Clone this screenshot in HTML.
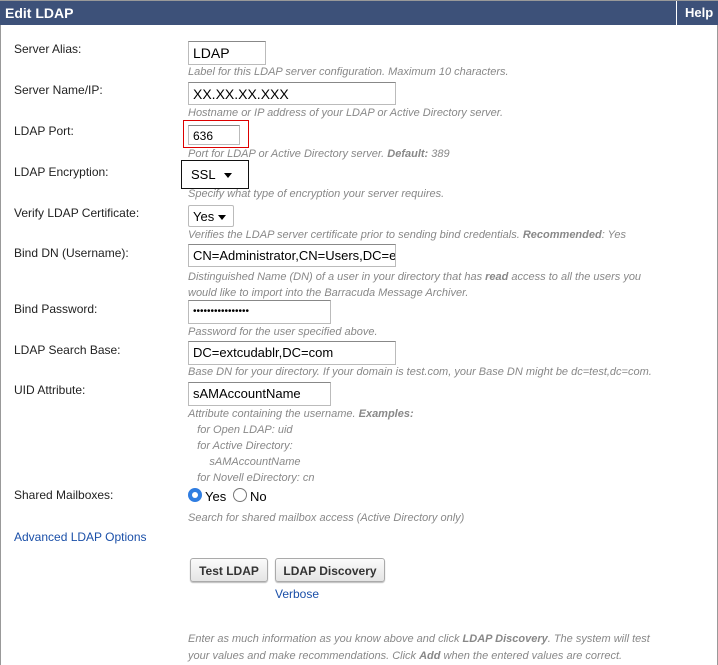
<!DOCTYPE html>
<html><head><style>
*{box-sizing:border-box;margin:0;padding:0}
body{width:718px;height:665px;background:#fff;font-family:"Liberation Sans",Arial,sans-serif;position:relative;overflow:hidden;box-shadow:inset 1px 0 0 #999,inset -1px 0 0 #999}
.hd{position:absolute;left:0;top:0;width:718px;height:25px;background:#3d5179;border-top:1px solid #999;color:#fff;font-weight:bold;font-size:14px}
.a{position:absolute;white-space:nowrap}
.l{font-size:12px;color:#222;left:14px}
.h{font-size:11px;color:#888;font-style:italic;left:188px}
.i{border:1px solid #bbb;border-top-color:#888;font-size:14px;color:#000;padding:3px 0 0 4px;background:#fff}
.s{border:1px solid #bbb;font-size:14px;padding:3px 0 0 4px;border-radius:2px}
.s:after{content:"";position:absolute;right:7px;top:9px;border:4px solid transparent;border-top:5px solid #000}
.b{border:1px solid #aaa;border-radius:3px;background:linear-gradient(#fbfbfb,#e5e5e5);font-size:12px;font-weight:bold;color:#333;text-align:center;padding-top:5px;box-shadow:0 1px 1px #bbb}
a{color:#1a4fa8;text-decoration:none}
</style></head><body>
<div class="hd"><span class="a" style="left:5px;top:4px">Edit LDAP</span><div class="a" style="left:676px;top:0;width:1px;height:25px;background:#fff"></div><span class="a" style="left:685px;top:4px;font-size:13px">Help</span></div>

<div class="a l" style="top:42px">Server Alias:</div>
<div class="a i" style="left:188px;top:41px;width:78px;height:24px">LDAP</div>
<div class="a h" style="top:66px">Label for this LDAP server configuration. Maximum 10 characters.</div>

<div class="a l" style="top:83px">Server Name/IP:</div>
<div class="a i" style="left:188px;top:82px;width:208px;height:23px">XX.XX.XX.XXX</div>
<div class="a h" style="top:107px">Hostname or IP address of your LDAP or Active Directory server.</div>

<div class="a l" style="top:124px">LDAP Port:</div>
<div class="a" style="left:183px;top:120px;width:66px;height:28px;border:1px solid #d00"></div>
<div class="a i" style="left:188px;top:125px;width:52px;height:20px;font-size:12px;padding-top:3px">636</div>
<div class="a h" style="top:148px">Port for LDAP or Active Directory server. <b>Default:</b> 389</div>

<div class="a l" style="top:165px">LDAP Encryption:</div>
<div class="a" style="left:181px;top:160px;width:68px;height:29px;border:1px solid #111"></div>
<div class="a s" style="left:187px;top:164px;width:52px;height:21px;font-size:13px;border:none">SSL</div>
<div class="a h" style="top:188px">Specify what type of encryption your server requires.</div>

<div class="a l" style="top:206px">Verify LDAP Certificate:</div>
<div class="a s" style="left:188px;top:205px;width:46px;height:22px;font-size:13px">Yes</div>
<div class="a h" style="top:229px">Verifies the LDAP server certificate prior to sending bind credentials. <b>Recommended</b>: Yes</div>

<div class="a l" style="top:246px">Bind DN (Username):</div>
<div class="a i" style="left:188px;top:244px;width:208px;height:23px;overflow:hidden;font-size:13px">CN=Administrator,CN=Users,DC=e</div>
<div class="a h" style="top:269px;line-height:16px">Distinguished Name (DN) of a user in your directory that has <b>read</b> access to all the users you<br>would like to import into the Barracuda Message Archiver.</div>

<div class="a l" style="top:302px">Bind Password:</div>
<div class="a i" style="left:188px;top:300px;width:143px;height:24px;font-size:10px;padding-top:5px">••••••••••••••••</div>
<div class="a h" style="top:326px">Password for the user specified above.</div>

<div class="a l" style="top:343px">LDAP Search Base:</div>
<div class="a i" style="left:188px;top:341px;width:208px;height:24px;font-size:13px">DC=extcudablr,DC=com</div>
<div class="a h" style="top:366px">Base DN for your directory. If your domain is test.com, your Base DN might be dc=test,dc=com.</div>

<div class="a l" style="top:383px">UID Attribute:</div>
<div class="a i" style="left:188px;top:382px;width:143px;height:24px;font-size:13px">sAMAccountName</div>
<div class="a h" style="top:406px;line-height:16px">Attribute containing the username. <b>Examples:</b><br>&nbsp;&nbsp;&nbsp;for Open LDAP: uid<br>&nbsp;&nbsp;&nbsp;for Active Directory:<br>&nbsp;&nbsp;&nbsp;&nbsp;&nbsp;&nbsp;&nbsp;sAMAccountName<br>&nbsp;&nbsp;&nbsp;for Novell eDirectory: cn</div>

<div class="a l" style="top:488px">Shared Mailboxes:</div>
<div class="a" style="left:188px;top:488px;width:14px;height:14px;border-radius:50%;background:#2f7de1;border:1px solid #2f7de1"><div style="margin:3px;width:6px;height:6px;border-radius:50%;background:#fff"></div></div>
<div class="a" style="left:205px;top:489px;font-size:13px">Yes</div>
<div class="a" style="left:233px;top:488px;width:14px;height:14px;border-radius:50%;border:1px solid #777"></div>
<div class="a" style="left:250px;top:489px;font-size:13px">No</div>
<div class="a h" style="top:512px">Search for shared mailbox access (Active Directory only)</div>

<div class="a" style="left:14px;top:530px;font-size:12px"><a>Advanced LDAP Options</a></div>

<div class="a b" style="left:190px;top:558px;width:78px;height:24px">Test LDAP</div>
<div class="a b" style="left:275px;top:558px;width:110px;height:24px">LDAP Discovery</div>
<div class="a" style="left:275px;top:587px;font-size:12px"><a>Verbose</a></div>

<div class="a h" style="top:631px;line-height:17px">Enter as much information as you know above and click <b>LDAP Discovery</b>. The system will test<br>your values and make recommendations. Click <b>Add</b> when the entered values are correct.</div>
</body></html>
